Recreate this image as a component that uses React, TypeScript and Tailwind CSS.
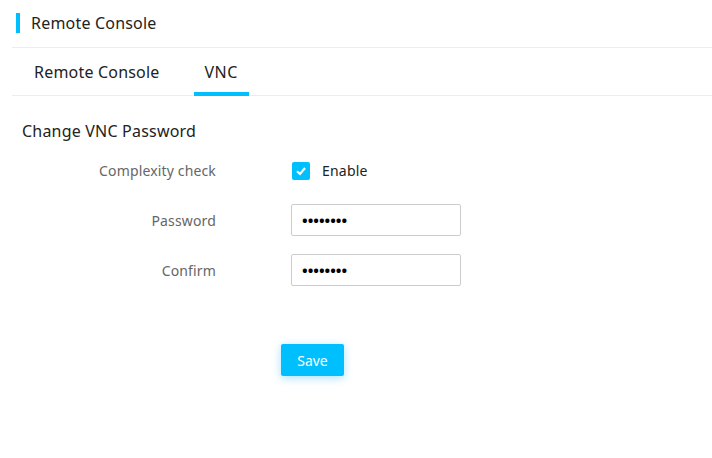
import React from "react";

const font = { fontFamily: '"Noto Sans", "Open Sans", Arial, sans-serif' };

function Row({ label, children }: { label: string; children: React.ReactNode }) {
  return (
    <div className="flex h-[50px] items-center">
      <div className="w-[216px] text-right text-[14px] tracking-[0.15px] text-[#666]">{label}</div>
      <div className="ml-[75px] flex items-center">{children}</div>
    </div>
  );
}

export default function App() {
  return (
    <div className="h-[458px] w-[712px] bg-white text-[#222]" style={font}>
      <div className="flex h-[47px] items-center pb-[2px] pl-4">
        <div className="h-5 w-1 bg-[#00bfff]" />
        <span className="ml-[11px] text-[16px] tracking-[0.2px]">Remote Console</span>
      </div>
      <div className="ml-3 border-t border-[#ececf4]" />
      <div className="ml-3 flex h-[48px] border-b border-[#ececf4]">
        <div className="flex items-center pl-[22px] text-[16px] tracking-[0.2px]">Remote Console</div>
        <div className="relative ml-[34px] flex w-[55px] items-center justify-center text-[16px] tracking-[0.5px]">
          VNC
          <div className="absolute bottom-[-1px] left-0 right-0 h-[4px] bg-[#00bfff]" />
        </div>
      </div>
      <div className="pl-[22px] pt-[24px] text-[16px] leading-[22px] tracking-[0.2px]">Change VNC Password</div>
      <div className="mt-[3px]">
        <Row label="Complexity check">
          <div className="ml-[1px] mt-[2px] flex h-[18px] w-[18px] items-center justify-center rounded-[2px] bg-[#00bfff]">
            <svg width="14" height="14" viewBox="0 0 14 14">
              <path d="M3 7.2 L6 10 L11 4" fill="none" stroke="white" strokeWidth="2.2" />
            </svg>
          </div>
          <span className="ml-3 text-[14px] tracking-[0.2px] text-[#222]">Enable</span>
        </Row>
        <Row label="Password">
          <input
            type="password"
            defaultValue="12345678"
            className="h-[32px] w-[170px] rounded-[2px] border border-[#ccc] px-[10px] text-[15px] font-bold text-black outline-none"
          />
        </Row>
        <Row label="Confirm">
          <input
            type="password"
            defaultValue="12345678"
            className="h-[32px] w-[170px] rounded-[2px] border border-[#ccc] px-[10px] text-[15px] font-bold text-black outline-none"
          />
        </Row>
      </div>
      <div className="ml-[281px] mt-[49px]">
        <button className="h-[32px] w-[63px] rounded-[2px] bg-[#00bfff] text-[14px] text-white shadow-[0_2px_8px_rgba(0,170,255,0.35)]">
          Save
        </button>
      </div>
    </div>
  );
}
